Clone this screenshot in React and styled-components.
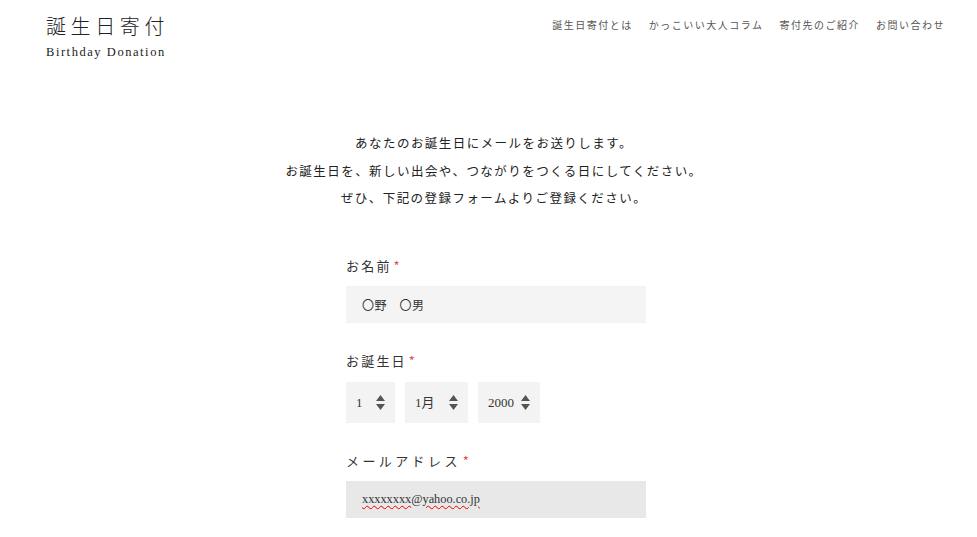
import React from 'react';
import styled, { createGlobalStyle } from 'styled-components';

const GlobalStyle = createGlobalStyle`
  body {
    margin: 0;
    background: #fff;
    color: #333;
    font-family: "Noto Sans CJK JP", "Noto Sans", sans-serif;
  }
`;

const Header = styled.header`
  display: flex;
  justify-content: space-between;
  align-items: flex-start;
  padding: 13px 32px 0 46px;
`;

const Logo = styled.div`
  display: flex;
  flex-direction: column;
`;

const LogoMark = styled.div`
  font-family: "Noto Sans CJK JP", serif;
  font-weight: 300;
  font-size: 20px;
  line-height: 26px;
  letter-spacing: 4.6px;
  color: #222;
`;

const LogoSub = styled.div`
  margin-top: 5px;
  font-family: "Liberation Serif", serif;
  font-size: 12.5px;
  line-height: 16px;
  letter-spacing: 1.55px;
  color: #222;
`;

const Nav = styled.nav`
  display: flex;
  gap: 16px;
  margin-top: 4px;
`;

const NavLink = styled.a`
  font-size: 10px;
  line-height: 16px;
  letter-spacing: 1.5px;
  color: #555;
  text-decoration: none;
`;

const Main = styled.main`
  display: flex;
  flex-direction: column;
  align-items: center;
  padding: 69px 0 0 11px;
`;

const Intro = styled.div`
  text-align: center;
  font-size: 12.5px;
  line-height: 27.5px;
  letter-spacing: 1.45px;
  color: #222;
`;

const Form = styled.form`
  width: 300px;
  margin: 44px 0 0 4px;
  display: flex;
  flex-direction: column;
`;

const Group = styled.div`
  display: flex;
  flex-direction: column;
  margin-bottom: ${p => p.$gap || 28}px;
`;

const Label = styled.label`
  font-size: 13px;
  line-height: 20px;
  letter-spacing: ${p => p.$wide ? 3.4 : 2.2}px;
  color: #333;
  margin-bottom: 10px;
`;

const Required = styled.span`
  color: #d9534f;
  margin-left: 2px;
`;

const Field = styled.div`
  height: 37px;
  box-sizing: border-box;
  padding: 0 16px;
  display: flex;
  align-items: center;
  background: ${p => p.$active ? '#e8e8e8' : '#f4f4f4'};
  font-family: "Liberation Serif", "Noto Sans CJK JP", serif;
  font-size: 12.3px;
  color: #333;
`;

const NameText = styled.span`
  font-family: "Noto Sans CJK JP", sans-serif;
  font-size: 12px;
  letter-spacing: 0.5px;
`;

const Spell = styled.span`
  text-decoration: underline wavy #e00;
  text-decoration-thickness: 1px;
  text-underline-offset: 2px;
`;

const SelectRow = styled.div`
  display: flex;
  gap: 10px;
  margin-top: 1px;
`;

const SelectWrap = styled.div`
  position: relative;
  width: ${p => p.$w}px;
`;

const Select = styled.select`
  appearance: none;
  -webkit-appearance: none;
  width: 100%;
  height: 41px;
  border: none;
  border-radius: 0;
  outline: none;
  background: #f3f3f3;
  padding: 0 0 0 10px;
  font-family: "Liberation Serif", "Noto Sans CJK JP", serif;
  font-size: 13px;
  color: #333;
`;

const Arrow = styled.svg`
  position: absolute;
  right: 10px;
  top: 13px;
  pointer-events: none;
`;

const SelectArrow = () => (
  <Arrow width="9" height="15" viewBox="0 0 9 15">
    <path d="M4.5 0 L9 6 L0 6 Z" fill="#555" />
    <path d="M0 9 L9 9 L4.5 15 Z" fill="#555" />
  </Arrow>
);

const navItems = ['誕生日寄付とは', 'かっこいい大人コラム', '寄付先のご紹介', 'お問い合わせ'];

const selects = [
  { w: 49, value: '1', options: Array.from({ length: 31 }, (_, i) => `${i + 1}`) },
  { w: 63, value: '1月', options: Array.from({ length: 12 }, (_, i) => `${i + 1}月`) },
  { w: 62, value: '2000', options: ['1990', '2000', '2010'] },
];

const App = () => (
  <>
    <GlobalStyle />
    <Header>
      <Logo>
        <LogoMark>誕生日寄付</LogoMark>
        <LogoSub>Birthday Donation</LogoSub>
      </Logo>
      <Nav>
        {navItems.map(item => (
          <NavLink key={item} href="#">{item}</NavLink>
        ))}
      </Nav>
    </Header>
    <Main>
      <Intro>
        あなたのお誕生日にメールをお送りします。<br />
        お誕生日を、新しい出会や、つながりをつくる日にしてください。<br />
        ぜひ、下記の登録フォームよりご登録ください。
      </Intro>
      <Form>
        <Group>
          <Label>お名前<Required>*</Required></Label>
          <Field><NameText>〇野　〇男</NameText></Field>
        </Group>
        <Group $gap={28}>
          <Label>お誕生日<Required>*</Required></Label>
          <SelectRow>
            {selects.map(s => (
              <SelectWrap key={s.value} $w={s.w}>
                <Select defaultValue={s.value}>
                  {s.options.map(o => <option key={o}>{o}</option>)}
                </Select>
                <SelectArrow />
              </SelectWrap>
            ))}
          </SelectRow>
        </Group>
        <Group>
          <Label $wide>メールアドレス<Required>*</Required></Label>
          <Field $active>
            <Spell>xxxxxxxx</Spell>@<Spell>yahoo.co.jp</Spell>
          </Field>
        </Group>
      </Form>
    </Main>
  </>
);

export default App;
